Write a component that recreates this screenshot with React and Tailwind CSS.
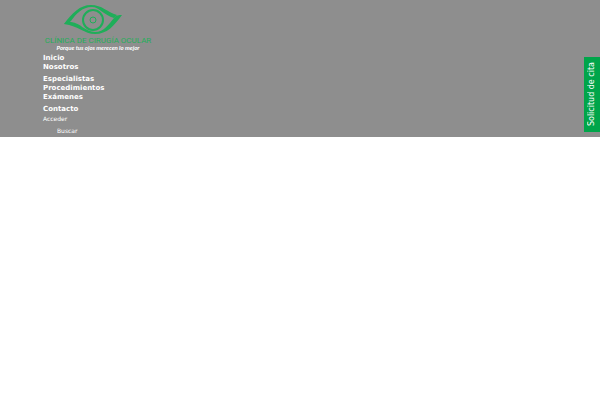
import React from "react";

const groups = [
    ["Inicio", "Nosotros"],
    ["Especialistas", "Procedimientos", "Exámenes"],
    ["Contacto"],
];

function Logo() {
    return (
        <a href="#" className="flex w-[110px] flex-col items-center whitespace-nowrap pt-1">
            <svg viewBox="0 0 60 32" className="mr-2.5 h-8 w-[60px]" fill="none" aria-hidden="true">
                <path d="M1 20C9 9 17 1 28 1c11 0 16 7 26 10l-3 3C41 11 36 3 29 3 19 3 13 10 8 17c-2 2-4 3-7 3Z" fill="#1fae59" />
                <path d="M1 20c2-2 5-2 7-2 10 1 14 10 24 10 9 0 14-8 19-14 2-3 5-3 8-3C51 22 44 30 32 30 21 30 16 22 1 20Z" fill="#1fae59" />
                <circle cx="30" cy="16" r="10" stroke="#1fae59" strokeWidth="2" />
                <circle cx="30" cy="16" r="3" stroke="#1fae59" strokeWidth="1" />
            </svg>
            <span className="font-['Roboto',sans-serif] text-[8px] leading-[9px] text-[#1fae59]">
                CLÍNICA DE CIRUGÍA OCULAR
            </span>
            <span className="font-['Lato',sans-serif] text-[6px] font-bold italic leading-[6px] text-white">
                Porque tus ojos merecen lo mejor
            </span>
        </a>
    );
}

export default function App() {
    return (
        <div className="min-h-screen bg-white font-['DejaVu_Sans',sans-serif]">
            <header className="bg-[#8e8e8e] pl-[43px] text-white">
                <Logo />
                <nav className="flex flex-col gap-[3px] pt-[3px] text-[7px] font-bold leading-[9px]">
                    {groups.map((items) => (
                        <ul key={items[0]}>
                            {items.map((item) => (
                                <li key={item}>
                                    <a href="#">{item}</a>
                                </li>
                            ))}
                        </ul>
                    ))}
                </nav>
                <div className="flex flex-col items-start text-[6px]">
                    <a href="#" className="leading-[10px]">Acceder</a>
                    <input
                        type="search"
                        aria-label="Buscar"
                        placeholder="Buscar"
                        className="ml-3.5 mt-px h-3 w-20 bg-transparent leading-3 placeholder:text-white"
                    />
                </div>
            </header>

            {/* Side tab */}
            <button className="fixed right-0 top-[57px] flex h-[75px] w-4 items-center justify-center bg-[#00a54a] text-white">
                <span className="rotate-180 whitespace-nowrap text-[8px] leading-4 [writing-mode:vertical-rl]">
                    Solicitud de cita
                </span>
            </button>
        </div>
    );
}
